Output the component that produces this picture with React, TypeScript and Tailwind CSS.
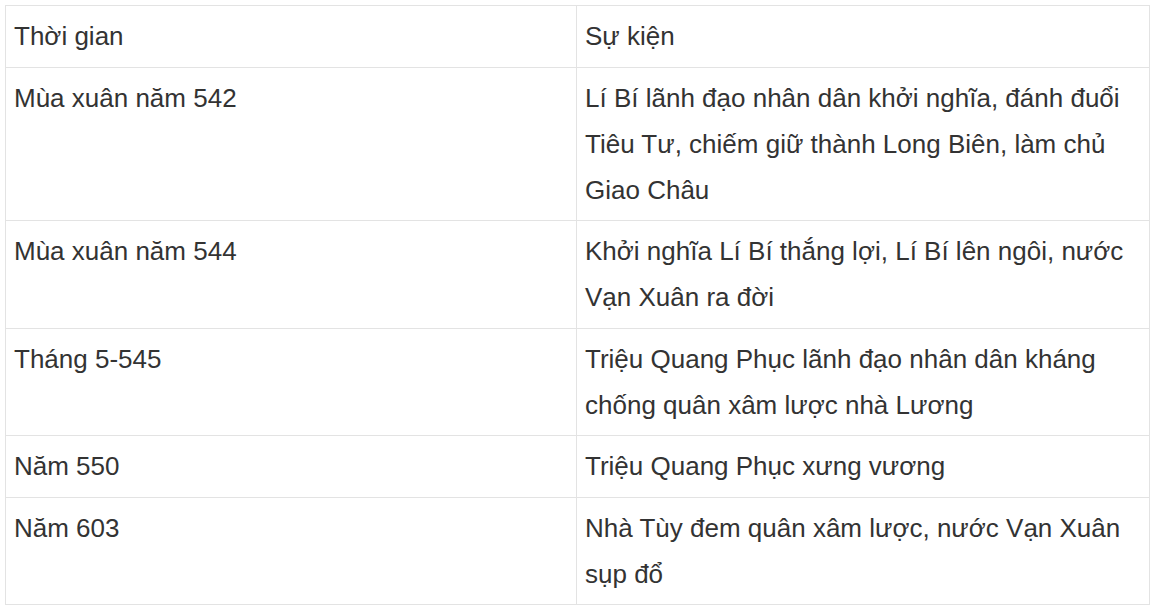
const rows: [string, string][] = [
  ["Thời gian", "Sự kiện"],
  ["Mùa xuân năm 542", "Lí Bí lãnh đạo nhân dân khởi nghĩa, đánh đuổi Tiêu Tư, chiếm giữ thành Long Biên, làm chủ Giao Châu"],
  ["Mùa xuân năm 544", "Khởi nghĩa Lí Bí thắng lợi, Lí Bí lên ngôi, nước Vạn Xuân ra đời"],
  ["Tháng 5-545", "Triệu Quang Phục lãnh đạo nhân dân kháng chống quân xâm lược nhà Lương"],
  ["Năm 550", "Triệu Quang Phục xưng vương"],
  ["Năm 603", "Nhà Tùy đem quân xâm lược, nước Vạn Xuân sụp đổ"],
];

export default function App() {
  return (
    <div className="min-h-screen bg-white pl-[5px] pt-[5px]">
      <table
        className="w-[1145px] table-fixed border-collapse text-[26px] leading-[46px] text-[#333]"
        style={{ fontFamily: '"Liberation Sans", Arial, sans-serif' }}
      >
        <tbody>
          {rows.map(([time, event], i) => (
            <tr key={i}>
              <td className="w-[571px] border border-[#e3e3e3] px-[8px] pt-[7px] pb-[7.5px] align-top">
                {time}
              </td>
              <td className="border border-[#e3e3e3] px-[8px] pt-[7px] pb-[7.5px] align-top">
                {event}
              </td>
            </tr>
          ))}
        </tbody>
      </table>
    </div>
  );
}
